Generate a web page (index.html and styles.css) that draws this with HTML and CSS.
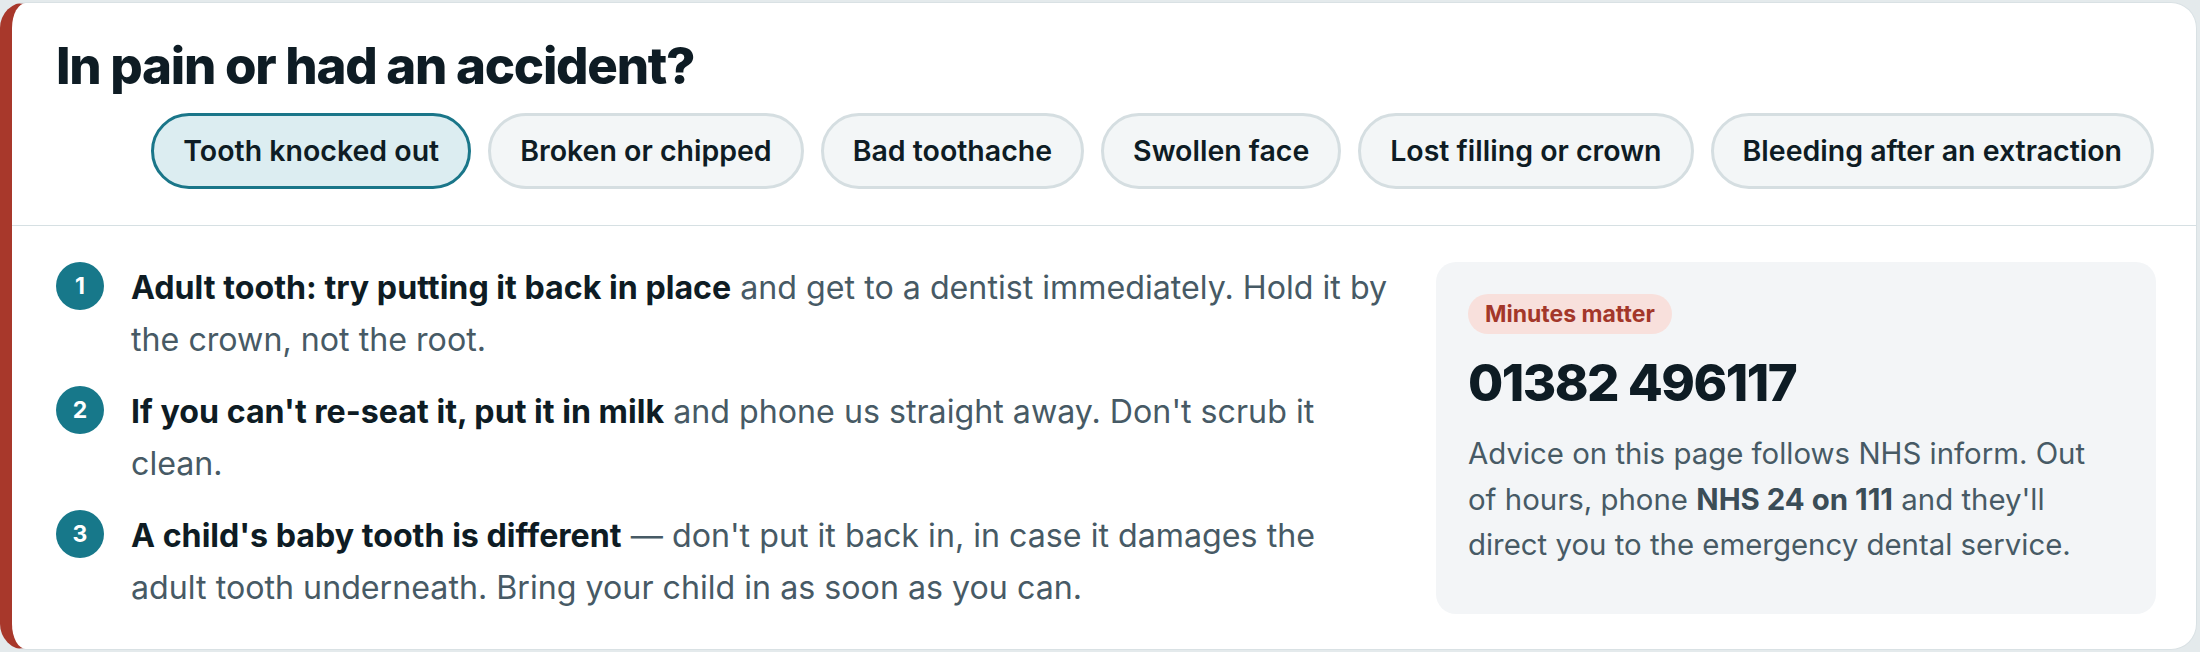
FILE: index.html
```html
<!DOCTYPE html>
<html lang="en">
<head>
<meta charset="utf-8">
<title>In pain or had an accident?</title>
<link rel="stylesheet" href="styles.css">
</head>
<body>
<section class="card">
  <header class="card-head">
    <h2 class="title">In pain or had an accident?</h2>
    <div class="chips">
      <button class="chip is-active">Tooth knocked out</button>
      <button class="chip">Broken or chipped</button>
      <button class="chip">Bad toothache</button>
      <button class="chip">Swollen face</button>
      <button class="chip">Lost filling or crown</button>
      <button class="chip">Bleeding after an extraction</button>
    </div>
  </header>
  <div class="card-body">
    <ol class="steps">
      <li class="step"><span class="num">1</span><p><strong>Adult tooth: try putting it back in place</strong> and get to a dentist immediately. Hold it by the crown, not the root.</p></li>
      <li class="step"><span class="num">2</span><p><strong>If you can't re-seat it, put it in milk</strong> and phone us straight away. Don't scrub it clean.</p></li>
      <li class="step"><span class="num">3</span><p><strong>A child's baby tooth is different</strong> — don't put it back in, in case it damages the adult tooth underneath. Bring your child in as soon as you can.</p></li>
    </ol>
    <aside class="callout">
      <span class="pill">Minutes matter</span>
      <div class="phone">01382 496117</div>
      <p class="note">Advice on this page follows NHS inform. Out of hours, phone <strong>NHS 24 on 111</strong> and they'll direct you to the emergency dental service.</p>
    </aside>
  </div>
</section>
</body>
</html>
```
FILE: styles.css
```css
* { box-sizing: border-box; }
html, body { margin: 0; }
body {
  background: #e4eaec;
  padding: 2px 3px 0 0;
  font-family: "Inter", "Noto Sans", sans-serif;
  color: #0e1c24;
}
.card {
  background: #ffffff;
  border: 1px solid #d9e1e4;
  border-left: 12px solid #a8382b;
  border-radius: 26px;
  overflow: hidden;
}
.card-head {
  padding: 35px 42px 36px 44px;
  border-bottom: 1px solid #d6e0e3;
}
.title {
  margin: 0;
  font-size: 51px;
  line-height: 55px;
  font-weight: 800;
  letter-spacing: -0.025em;
  color: #0e1c24;
}
.chips {
  margin-top: 20px;
  display: flex;
  justify-content: flex-end;
  gap: 17px;
}
.chip {
  font-family: "Inter", "Noto Sans", sans-serif;
  font-size: 28.5px;
  font-weight: 600;
  line-height: 36px;
  color: #0e1c24;
  background: #f3f6f7;
  border: 3px solid #d5dee1;
  border-radius: 999px;
  padding: 17px 29px;
  white-space: nowrap;
}
.chip.is-active {
  background: #dcedf1;
  border-color: #1a7689;
}
.card-body {
  display: grid;
  grid-template-columns: 1fr 720px;
  gap: 38px;
  padding: 36px 40px 35px 44px;
}
.steps {
  list-style: none;
  margin: 0;
  padding: 0;
  display: flex;
  flex-direction: column;
  gap: 21px;
}
.step {
  display: flex;
  align-items: flex-start;
  gap: 27px;
}
.num {
  flex: none;
  width: 48px;
  height: 48px;
  border-radius: 50%;
  background: #17788a;
  color: #ffffff;
  font-size: 23px;
  font-weight: 700;
  display: flex;
  align-items: center;
  justify-content: center;
}
.step p {
  margin: 0;
  font-size: 32.2px;
  line-height: 51.6px;
  color: #475a65;
}
.step strong {
  font-weight: 700;
  color: #0e1c24;
}
.note strong {
  font-weight: 700;
  color: #3b4d57;
}
.callout {
  background: #f3f5f7;
  border-radius: 20px;
  padding: 32px 42px 32px 32px;
  display: flex;
  flex-direction: column;
  align-items: flex-start;
}
.pill {
  background: #f8e0dc;
  color: #a3372a;
  font-size: 23px;
  font-weight: 700;
  line-height: 40px;
  padding: 0 17px;
  border-radius: 999px;
}
.phone {
  margin-top: 21px;
  font-size: 51px;
  line-height: 55px;
  font-weight: 800;
  letter-spacing: -0.03em;
  color: #0e1c24;
}
.note {
  margin: 21px 0 0;
  font-size: 29.4px;
  line-height: 45.5px;
  color: #475a65;
}
```
